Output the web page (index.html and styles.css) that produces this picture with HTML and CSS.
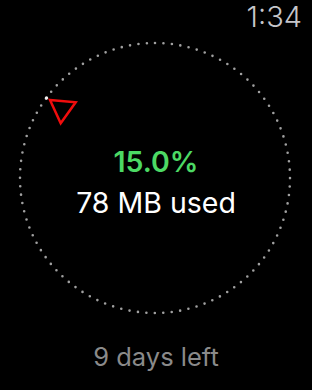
FILE: index.html
```html
<!DOCTYPE html>
<html>
<head>
<meta charset="utf-8">
<link rel="stylesheet" href="styles.css">
</head>
<body>
<div class="screen">
  <svg class="ring" width="312" height="390" viewBox="0 0 312 390">
    <circle class="track" cx="155" cy="178" r="135" transform="rotate(-90 155 178)"/>
    <circle class="marker-dot" cx="46.5" cy="98" r="1.7"/>
    <polygon class="marker" points="50,100 75.7,102.3 60.7,123.3"/>
  </svg>
  <div class="time">1:34</div>
  <div class="center">
    <div class="pct">15.0%</div>
    <div class="used">78 MB used</div>
  </div>
  <div class="left">9 days left</div>
</div>
</body>
</html>
```
FILE: styles.css
```css
html, body {
  margin: 0;
  padding: 0;
  background: #000;
}
.screen {
  position: relative;
  width: 312px;
  height: 390px;
  overflow: hidden;
  background: #000;
  font-family: "Inter", "Roboto", sans-serif;
}
.ring {
  position: absolute;
  left: 0;
  top: 0;
}
.track {
  fill: none;
  stroke: #a0a0a0;
  stroke-width: 2.6;
  stroke-linecap: round;
  stroke-dasharray: 0 8.4823;
}
.marker-dot {
  fill: #f0f0f0;
}
.marker {
  fill: none;
  stroke: #f00d0d;
  stroke-width: 2.5;
  stroke-linejoin: miter;
}
.time {
  position: relative;
  text-align: right;
  padding-right: 10px;
  font-size: 29px;
  line-height: 34px;
  font-weight: 300;
  color: #c6c6cb;
}
.center {
  position: relative;
  margin-top: 111px;
  display: flex;
  flex-direction: column;
  align-items: center;
  gap: 7px;
}
.pct {
  font-size: 28.5px;
  line-height: 34px;
  font-weight: 600;
  color: #4cd964;
}
.used {
  font-size: 28.5px;
  line-height: 34px;
  font-weight: 400;
  color: #fff;
}
.left {
  position: relative;
  margin-top: 122px;
  text-align: center;
  font-size: 25.5px;
  line-height: 30px;
  font-weight: 400;
  color: #8a8a8a;
}
```
